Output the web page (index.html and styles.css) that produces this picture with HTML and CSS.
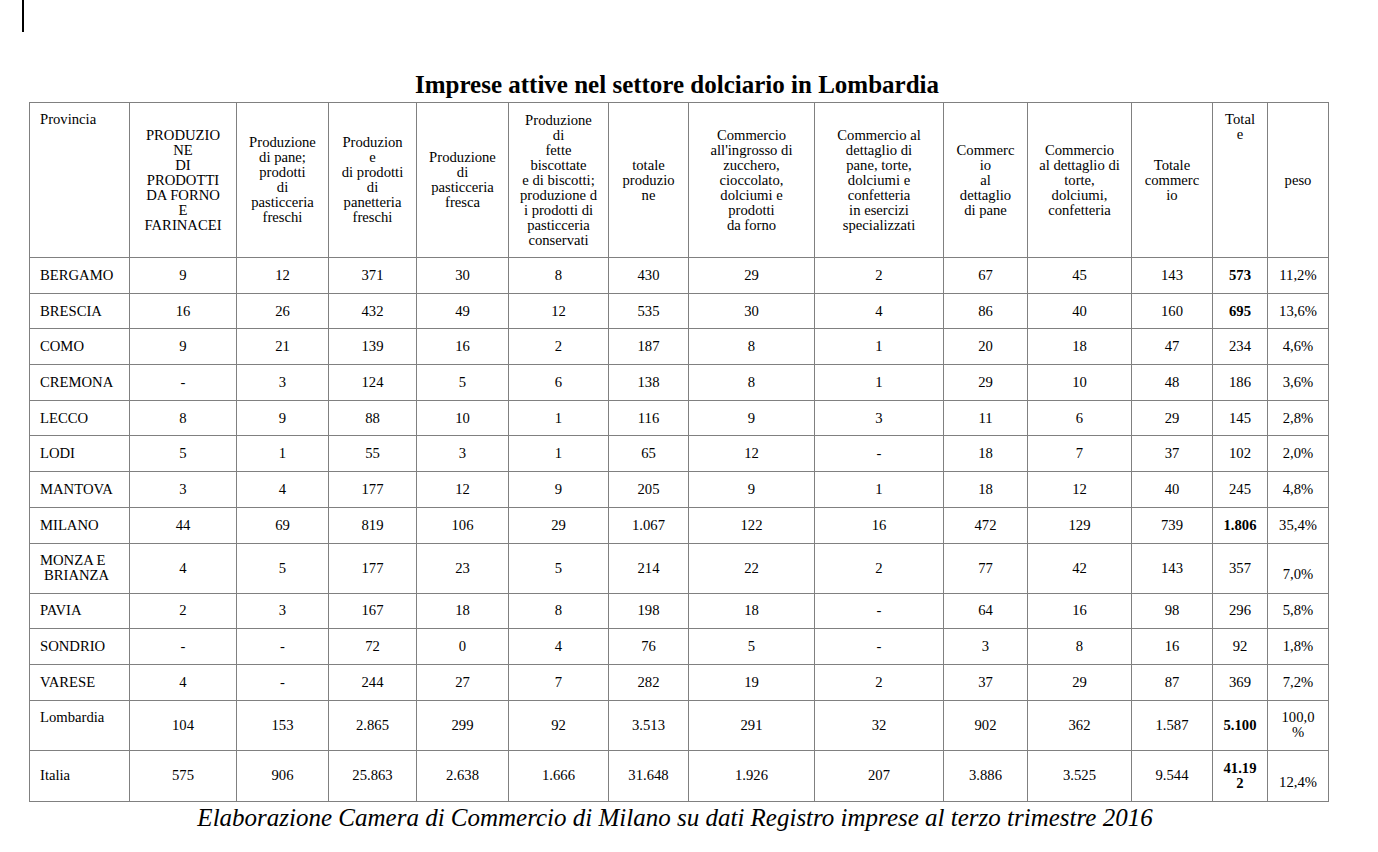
FILE: index.html
```html
<!DOCTYPE html>
<html lang="it">
<head>
<meta charset="utf-8">
<title>Imprese attive nel settore dolciario in Lombardia</title>
<link rel="stylesheet" href="styles.css">
</head>
<body>
<div class="caret"></div>
<h1 class="title">Imprese attive nel settore dolciario in Lombardia</h1>
<table class="data">
  <colgroup>
    <col class="c1"><col class="c2"><col class="c3"><col class="c4"><col class="c5"><col class="c6"><col class="c7">
    <col class="c8"><col class="c9"><col class="c10"><col class="c11"><col class="c12"><col class="c13"><col class="c14">
  </colgroup>
  <thead>
    <tr class="head">
      <th class="left top">Provincia</th>
      <th>PRODUZIO<br>NE<br>DI<br>PRODOTTI<br>DA FORNO<br>E<br>FARINACEI</th>
      <th>Produzione<br>di pane;<br>prodotti<br>di<br>pasticceria<br>freschi</th>
      <th>Produzion<br>e<br>di prodotti<br>di<br>panetteria<br>freschi</th>
      <th>Produzione<br>di<br>pasticceria<br>fresca</th>
      <th>Produzione<br>di<br>fette<br>biscottate<br>e di biscotti;<br>produzione d<br>i prodotti di<br>pasticceria<br>conservati</th>
      <th>totale<br>produzio<br>ne</th>
      <th>Commercio<br>all'ingrosso di<br>zucchero,<br>cioccolato,<br>dolciumi e<br>prodotti<br>da forno</th>
      <th>Commercio al<br>dettaglio di<br>pane, torte,<br>dolciumi e<br>confetteria<br>in esercizi<br>specializzati</th>
      <th>Commerc<br>io<br>al<br>dettaglio<br>di pane</th>
      <th>Commercio<br>al dettaglio di<br>torte,<br>dolciumi,<br>confetteria</th>
      <th>Totale<br>commerc<br>io</th>
      <th class="top">Total<br>e</th>
      <th>peso</th>
    </tr>
  </thead>
  <tbody>
    <tr><td class="left">BERGAMO</td><td>9</td><td>12</td><td>371</td><td>30</td><td>8</td><td>430</td><td>29</td><td>2</td><td>67</td><td>45</td><td>143</td><td class="b">573</td><td>11,2%</td></tr>
    <tr><td class="left">BRESCIA</td><td>16</td><td>26</td><td>432</td><td>49</td><td>12</td><td>535</td><td>30</td><td>4</td><td>86</td><td>40</td><td>160</td><td class="b">695</td><td>13,6%</td></tr>
    <tr><td class="left">COMO</td><td>9</td><td>21</td><td>139</td><td>16</td><td>2</td><td>187</td><td>8</td><td>1</td><td>20</td><td>18</td><td>47</td><td>234</td><td>4,6%</td></tr>
    <tr><td class="left">CREMONA</td><td>-</td><td>3</td><td>124</td><td>5</td><td>6</td><td>138</td><td>8</td><td>1</td><td>29</td><td>10</td><td>48</td><td>186</td><td>3,6%</td></tr>
    <tr><td class="left">LECCO</td><td>8</td><td>9</td><td>88</td><td>10</td><td>1</td><td>116</td><td>9</td><td>3</td><td>11</td><td>6</td><td>29</td><td>145</td><td>2,8%</td></tr>
    <tr><td class="left">LODI</td><td>5</td><td>1</td><td>55</td><td>3</td><td>1</td><td>65</td><td>12</td><td>-</td><td>18</td><td>7</td><td>37</td><td>102</td><td>2,0%</td></tr>
    <tr><td class="left">MANTOVA</td><td>3</td><td>4</td><td>177</td><td>12</td><td>9</td><td>205</td><td>9</td><td>1</td><td>18</td><td>12</td><td>40</td><td>245</td><td>4,8%</td></tr>
    <tr><td class="left">MILANO</td><td>44</td><td>69</td><td>819</td><td>106</td><td>29</td><td>1.067</td><td>122</td><td>16</td><td>472</td><td>129</td><td>739</td><td class="b">1.806</td><td>35,4%</td></tr>
    <tr class="tall"><td class="left">MONZA E<br><span class="indent">BRIANZA</span></td><td>4</td><td>5</td><td>177</td><td>23</td><td>5</td><td>214</td><td>22</td><td>2</td><td>77</td><td>42</td><td>143</td><td>357</td><td class="low">7,0%</td></tr>
    <tr><td class="left">PAVIA</td><td>2</td><td>3</td><td>167</td><td>18</td><td>8</td><td>198</td><td>18</td><td>-</td><td>64</td><td>16</td><td>98</td><td>296</td><td>5,8%</td></tr>
    <tr><td class="left">SONDRIO</td><td>-</td><td>-</td><td>72</td><td>0</td><td>4</td><td>76</td><td>5</td><td>-</td><td>3</td><td>8</td><td>16</td><td>92</td><td>1,8%</td></tr>
    <tr><td class="left">VARESE</td><td>4</td><td>-</td><td>244</td><td>27</td><td>7</td><td>282</td><td>19</td><td>2</td><td>37</td><td>29</td><td>87</td><td>369</td><td>7,2%</td></tr>
    <tr class="tall"><td class="left top">Lombardia</td><td>104</td><td>153</td><td>2.865</td><td>299</td><td>92</td><td>3.513</td><td>291</td><td>32</td><td>902</td><td>362</td><td>1.587</td><td class="b">5.100</td><td>100,0<br>%</td></tr>
    <tr class="taller"><td class="left">Italia</td><td>575</td><td>906</td><td>25.863</td><td>2.638</td><td>1.666</td><td>31.648</td><td>1.926</td><td>207</td><td>3.886</td><td>3.525</td><td>9.544</td><td class="b">41.19<br>2</td><td class="low">12,4%</td></tr>
  </tbody>
</table>
<p class="source">Elaborazione Camera di Commercio di Milano su dati Registro imprese al terzo trimestre 2016</p>
</body>
</html>
```

FILE: styles.css
```css
html, body {
  margin: 0;
  padding: 0;
  background: #ffffff;
  color: #000000;
  font-family: "Liberation Serif", "Times New Roman", serif;
}

.caret {
  margin-left: 22px;
  width: 2px;
  height: 32px;
  background: #000000;
}

.title {
  width: 1300px;
  margin: 38px 0 2px 27px;
  font-size: 25px;
  line-height: 30px;
  font-weight: bold;
  text-align: center;
}

.data {
  margin-left: 29px;
  width: 1300px;
  table-layout: fixed;
  border-collapse: collapse;
  font-size: 14.67px;
  line-height: 15px;
}

.c1 { width: 100px; }
.c2 { width: 107px; }
.c3 { width: 92px; }
.c4 { width: 88px; }
.c5 { width: 92px; }
.c6 { width: 100px; }
.c7 { width: 80px; }
.c8 { width: 126px; }
.c9 { width: 129px; }
.c10 { width: 84px; }
.c11 { width: 104px; }
.c12 { width: 81px; }
.c13 { width: 55px; }
.c14 { width: 61px; }

.data th,
.data td {
  box-sizing: border-box;
  border: 1px solid #808080;
  padding: 0 2px;
  text-align: center;
  vertical-align: middle;
  font-weight: normal;
  white-space: nowrap;
  height: 35.7px;
}

.data .head th {
  height: 155px;
}

.data .tall td {
  height: 50px;
}

.data .taller td {
  height: 51px;
}

.data .left {
  text-align: left;
  padding-left: 10px;
}

.data .top {
  vertical-align: top;
  padding-top: 9px;
}

.data .low {
  vertical-align: bottom;
  padding-bottom: 11px;
}

.data .b {
  font-weight: bold;
}

.indent {
  padding-left: 4px;
}

.source {
  width: 1300px;
  margin: 2px 0 0 25px;
  font-size: 25px;
  line-height: 28px;
  font-style: italic;
  text-align: center;
}
```
